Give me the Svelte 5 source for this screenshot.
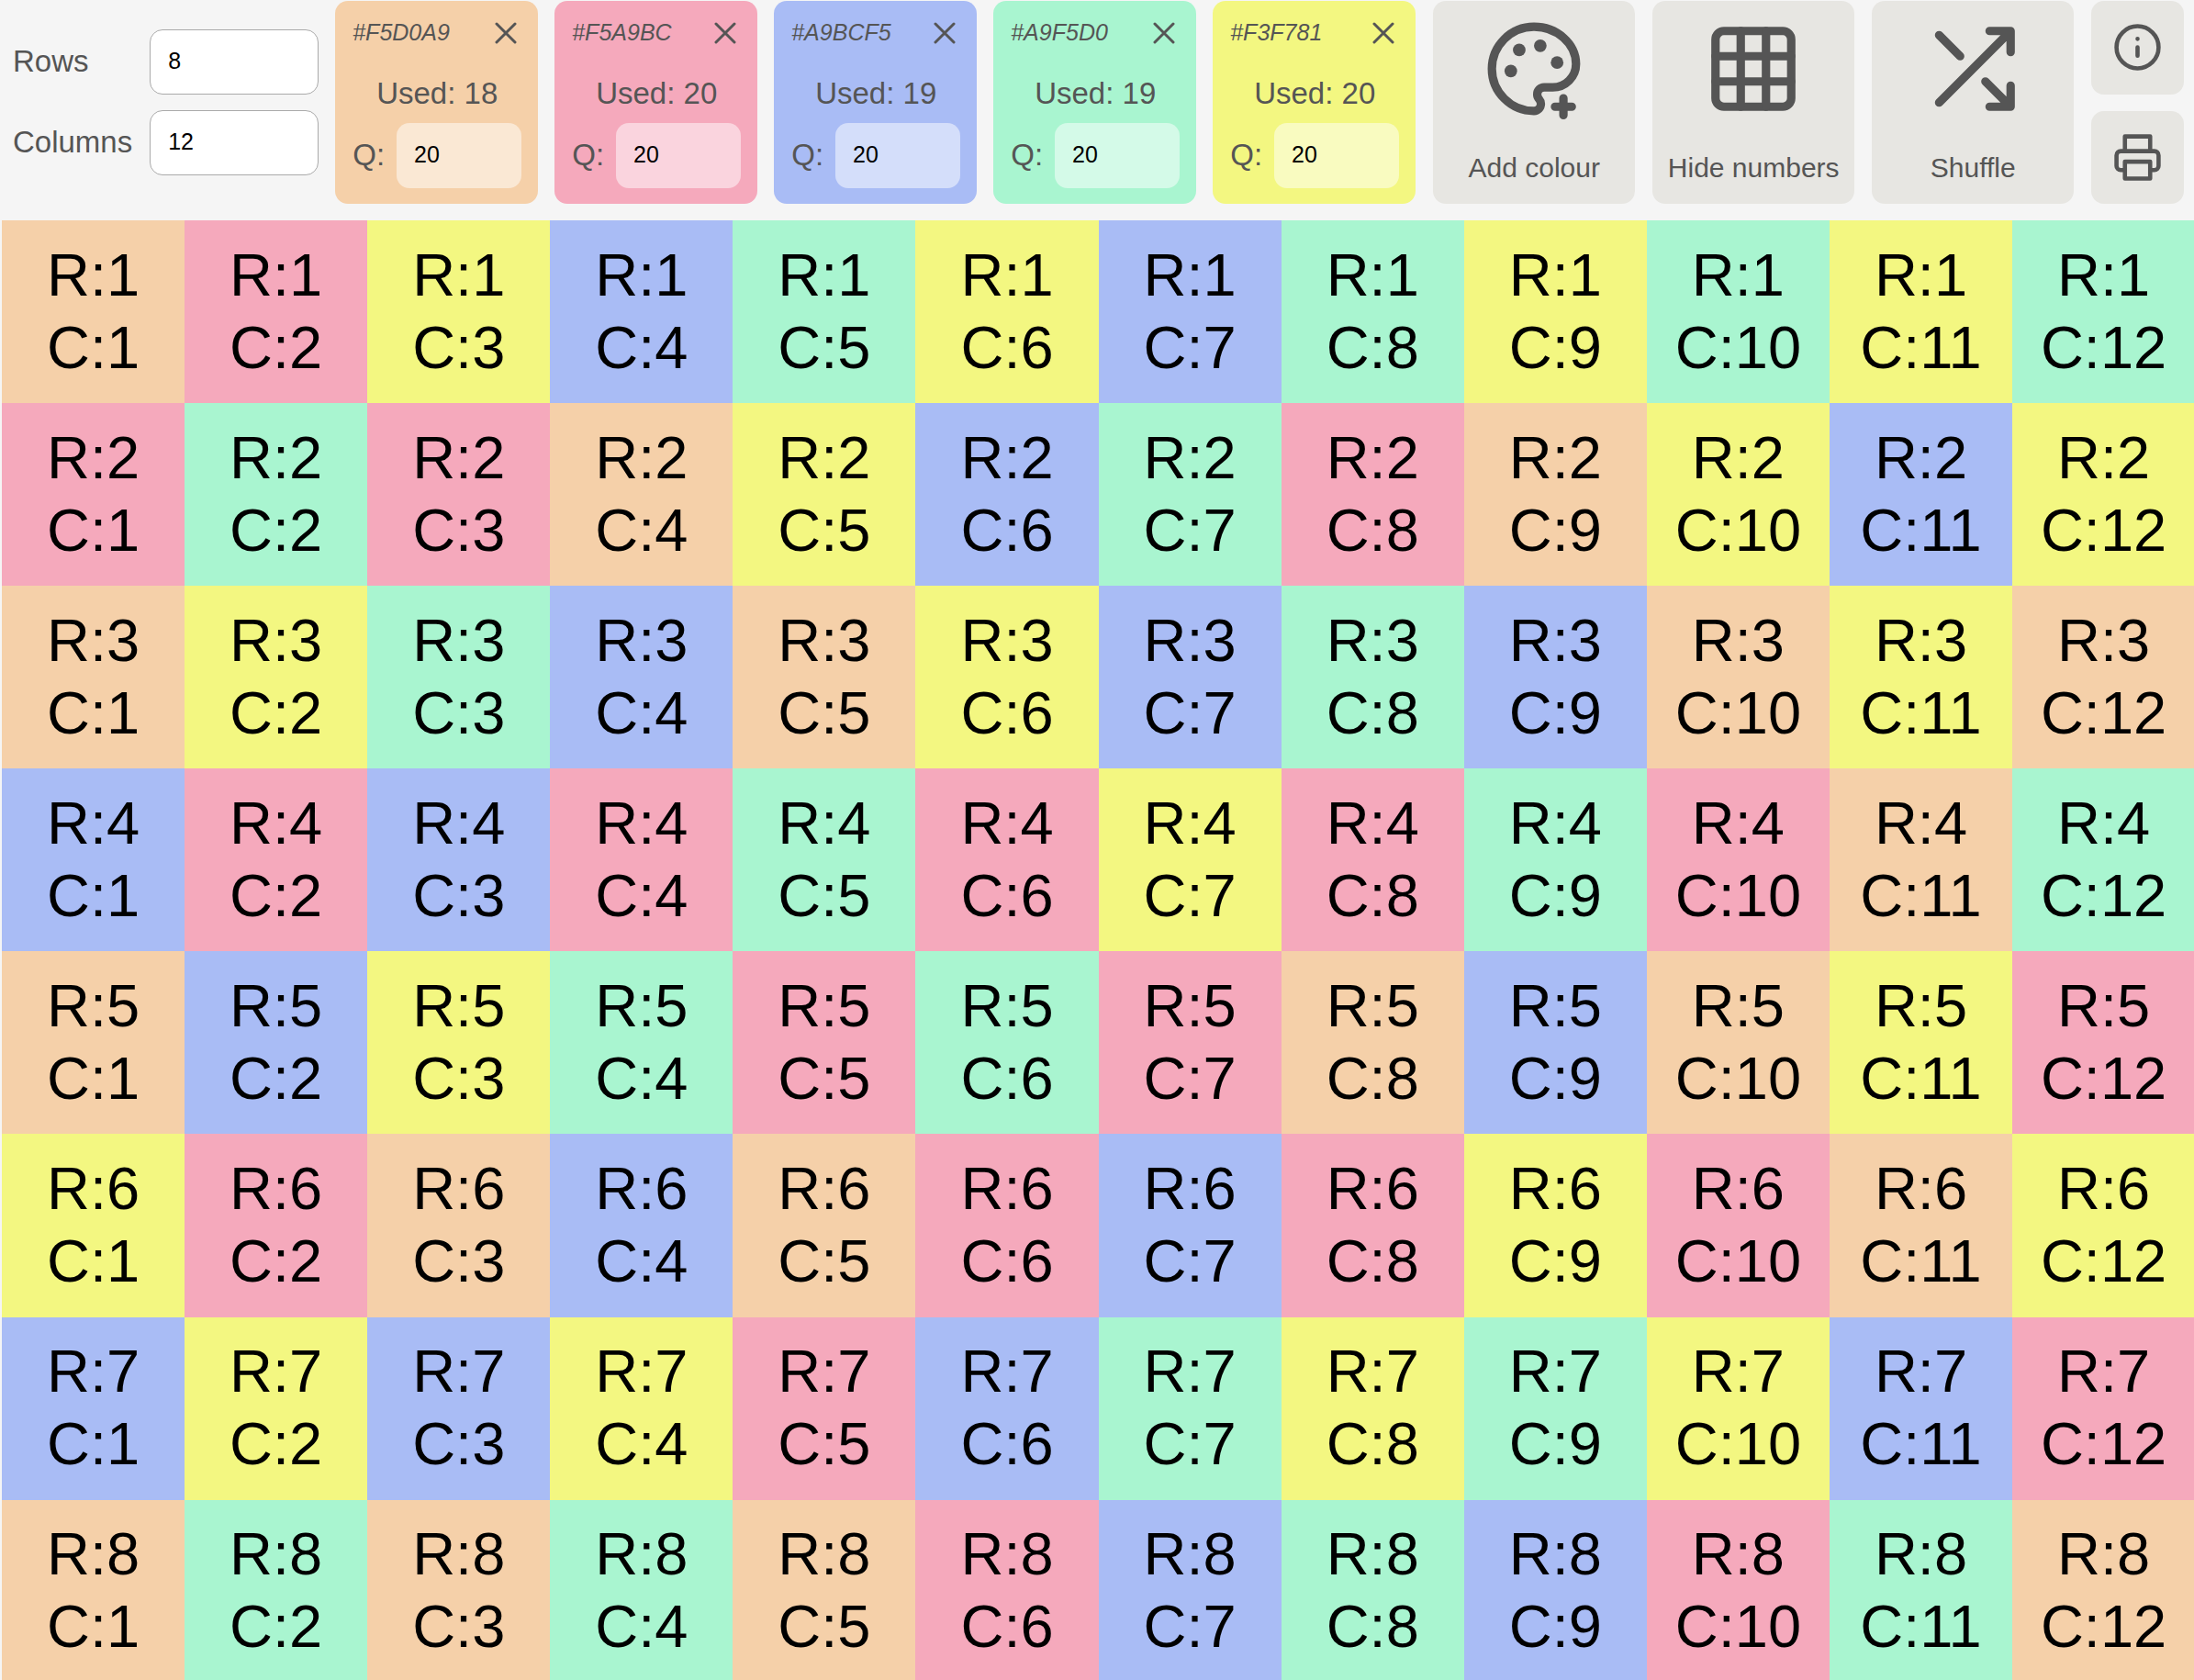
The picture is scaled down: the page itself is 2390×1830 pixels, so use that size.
<script>
  let rows = $state(8);
  let columns = $state(12);
  let colours = $state([
    { hex: '#F5D0A9', key: 'o', used: 18, quantity: 20 },
    { hex: '#F5A9BC', key: 'p', used: 20, quantity: 20 },
    { hex: '#A9BCF5', key: 'b', used: 19, quantity: 20 },
    { hex: '#A9F5D0', key: 'g', used: 19, quantity: 20 },
    { hex: '#F3F781', key: 'y', used: 20, quantity: 20 }
  ]);
  const names = { o: 'orange', p: 'pink', b: 'blue', g: 'green', y: 'yellow' };
  const layout = [
    'opybgybgygyg',
    'pgpoybgpoyby',
    'oygboybgboyo',
    'bpbpgpypgpog',
    'obygpgpoboyp',
    'ypobopbpypoy',
    'bybypbgygybp',
    'ogogopbgbpgo'
  ];
</script>

<header class="toolbar">
  <div class="size">
    <label for="rows">Rows</label>
    <input id="rows" type="text" inputmode="numeric" bind:value={rows} />
    <label for="columns">Columns</label>
    <input id="columns" type="text" inputmode="numeric" bind:value={columns} />
  </div>

  <div class="colours">
    {#each colours as colour (colour.hex)}
      <section class="card {names[colour.key]}">
        <div class="card-top">
          <em>{colour.hex}</em>
          <button class="remove" aria-label="Remove {colour.hex}">
            <svg viewBox="0 0 24 24"><path d="M2 2 22 22M22 2 2 22" /></svg>
          </button>
        </div>
        <p>Used: {colour.used}</p>
        <div class="quantity">
          <label for="q-{colour.key}">Q:</label>
          <input id="q-{colour.key}" type="text" inputmode="numeric" bind:value={colour.quantity} />
        </div>
      </section>
    {/each}
  </div>

  <div class="actions">
    <button class="action">
      <svg viewBox="0 0 24 24">
        <path d="M12 2C6.5 2 2 6.5 2 12s4.5 10 10 10c.926 0 1.648-.746 1.648-1.688 0-.437-.18-.835-.437-1.125-.29-.289-.438-.652-.438-1.125a1.64 1.64 0 0 1 1.668-1.668h1.996c3.051 0 5.555-2.503 5.555-5.554C21.965 6.012 17.461 2 12 2z" />
        <g class="dots">
          <circle cx="6.5" cy="12.5" r="1.5" /><circle cx="8.5" cy="7.5" r="1.5" />
          <circle cx="13.5" cy="6.5" r="1.5" /><circle cx="17.5" cy="10.5" r="1.5" />
        </g>
        <path d="M19 19v4M17 21h4" />
      </svg>
      <span>Add colour</span>
    </button>
    <button class="action">
      <svg viewBox="0 0 24 24">
        <rect x="3" y="3" width="18" height="18" rx="2" />
        <path d="M3 9h18M3 15h18M9 3v18M15 3v18" />
      </svg>
      <span>Hide numbers</span>
    </button>
    <button class="action">
      <svg viewBox="0 0 24 24">
        <path d="M16 3h5v5M4 20 21 3M21 16v5h-5M15 15l6 6M4 4l5 5" />
      </svg>
      <span>Shuffle</span>
    </button>
    <div class="small-actions">
      <button aria-label="Information">
        <svg viewBox="0 0 24 24"><circle cx="12" cy="12" r="10" /><path d="M12 12v4M12 8h.01" /></svg>
      </button>
      <button aria-label="Print">
        <svg viewBox="0 0 24 24">
          <path d="M6 9V2h12v7M6 18H4a2 2 0 0 1-2-2v-5a2 2 0 0 1 2-2h16a2 2 0 0 1 2 2v5a2 2 0 0 1-2 2h-2" />
          <path d="M6 14h12v8H6z" />
        </svg>
      </button>
    </div>
  </div>
</header>

<main class="board">
  {#each layout as line, r}
    {#each line as key, c}
      <div class="cell {names[key]}">R:{r + 1}<br />C:{c + 1}</div>
    {/each}
  {/each}
</main>

<style>
  :global(body) {
    background: #f5f5f5;
    color: #555;
    font-family: 'Liberation Sans', Arial, sans-serif;
    font-size: 33px;
    overflow: hidden;
  }
  button, input {
    box-sizing: border-box;
    font-family: inherit;
    color: inherit;
    border: 0;
    padding: 0;
  }
  button {
    background: #e7e6e2;
    border-radius: 14px;
    cursor: pointer;
  }
  svg {
    display: block;
    fill: none;
    stroke: currentColor;
    stroke-width: 2;
    stroke-linecap: round;
    stroke-linejoin: round;
  }
  .toolbar {
    display: flex;
    gap: 18px;
    padding: 1px 0 18px 14px;
  }
  .size {
    display: grid;
    grid-template-columns: auto 184px;
    grid-auto-rows: 71px;
    gap: 17px 19px;
    align-content: center;
    align-items: center;
  }
  label {
    padding-bottom: 2px;
  }
  input {
    height: 71px;
    width: 100%;
    min-width: 0;
    padding: 0 19px 2px;
    border-radius: 14px;
    font-size: 25px;
    color: #000;
    background: #fff;
  }
  .size input {
    border: 1px solid #aaa;
  }
  .colours {
    display: flex;
    gap: 18px;
  }
  .card {
    box-sizing: border-box;
    width: 221px;
    height: 221px;
    padding: 18px 18px 18px 19px;
    border-radius: 14px;
    display: flex;
    flex-direction: column;
  }
  .card-top {
    display: flex;
    align-items: center;
    justify-content: space-between;
    height: 34px;
    font-size: 25px;
  }
  .card-top em {
    padding-bottom: 2px;
  }
  .remove {
    width: 34px;
    height: 34px;
    display: grid;
    place-items: center;
    background: none;
  }
  .remove svg {
    width: 24px;
    height: 24px;
    stroke-width: 3;
  }
  .card p {
    margin: 0;
    padding-top: 30px;
    line-height: 38px;
    text-align: center;
  }
  .quantity {
    display: flex;
    align-items: center;
    gap: 13px;
    padding-top: 13px;
  }
  .card input {
    flex: 1;
    background: rgba(255, 255, 255, 0.5);
  }
  .actions {
    display: flex;
    gap: 19px;
    padding-left: 1px;
  }
  .action {
    width: 220px;
    height: 221px;
    display: flex;
    flex-direction: column;
    align-items: center;
    justify-content: space-between;
    padding: 19px 0 22px;
    font-size: 30px;
    line-height: 34px;
  }
  .action svg {
    width: 110px;
    height: 110px;
  }
  .dots {
    fill: currentColor;
    stroke: none;
  }
  .small-actions {
    display: flex;
    flex-direction: column;
    gap: 18px;
  }
  .small-actions button {
    width: 101px;
    flex: 1;
    display: grid;
    place-items: center;
  }
  .small-actions svg {
    width: 55px;
    height: 55px;
  }
  .board {
    display: grid;
    grid-template-columns: repeat(12, 1fr);
    margin: 0 -1px 0 2px;
  }
  .cell {
    box-sizing: border-box;
    aspect-ratio: 1;
    padding-bottom: 2px;
    display: grid;
    place-content: center;
    text-align: center;
    font-size: 65px;
    line-height: 79px;
    color: #000;
  }
  .orange { background: #f5d0a9; }
  .pink { background: #f5a9bc; }
  .blue { background: #a9bcf5; }
  .green { background: #a9f5d0; }
  .yellow { background: #f3f781; }
</style>
